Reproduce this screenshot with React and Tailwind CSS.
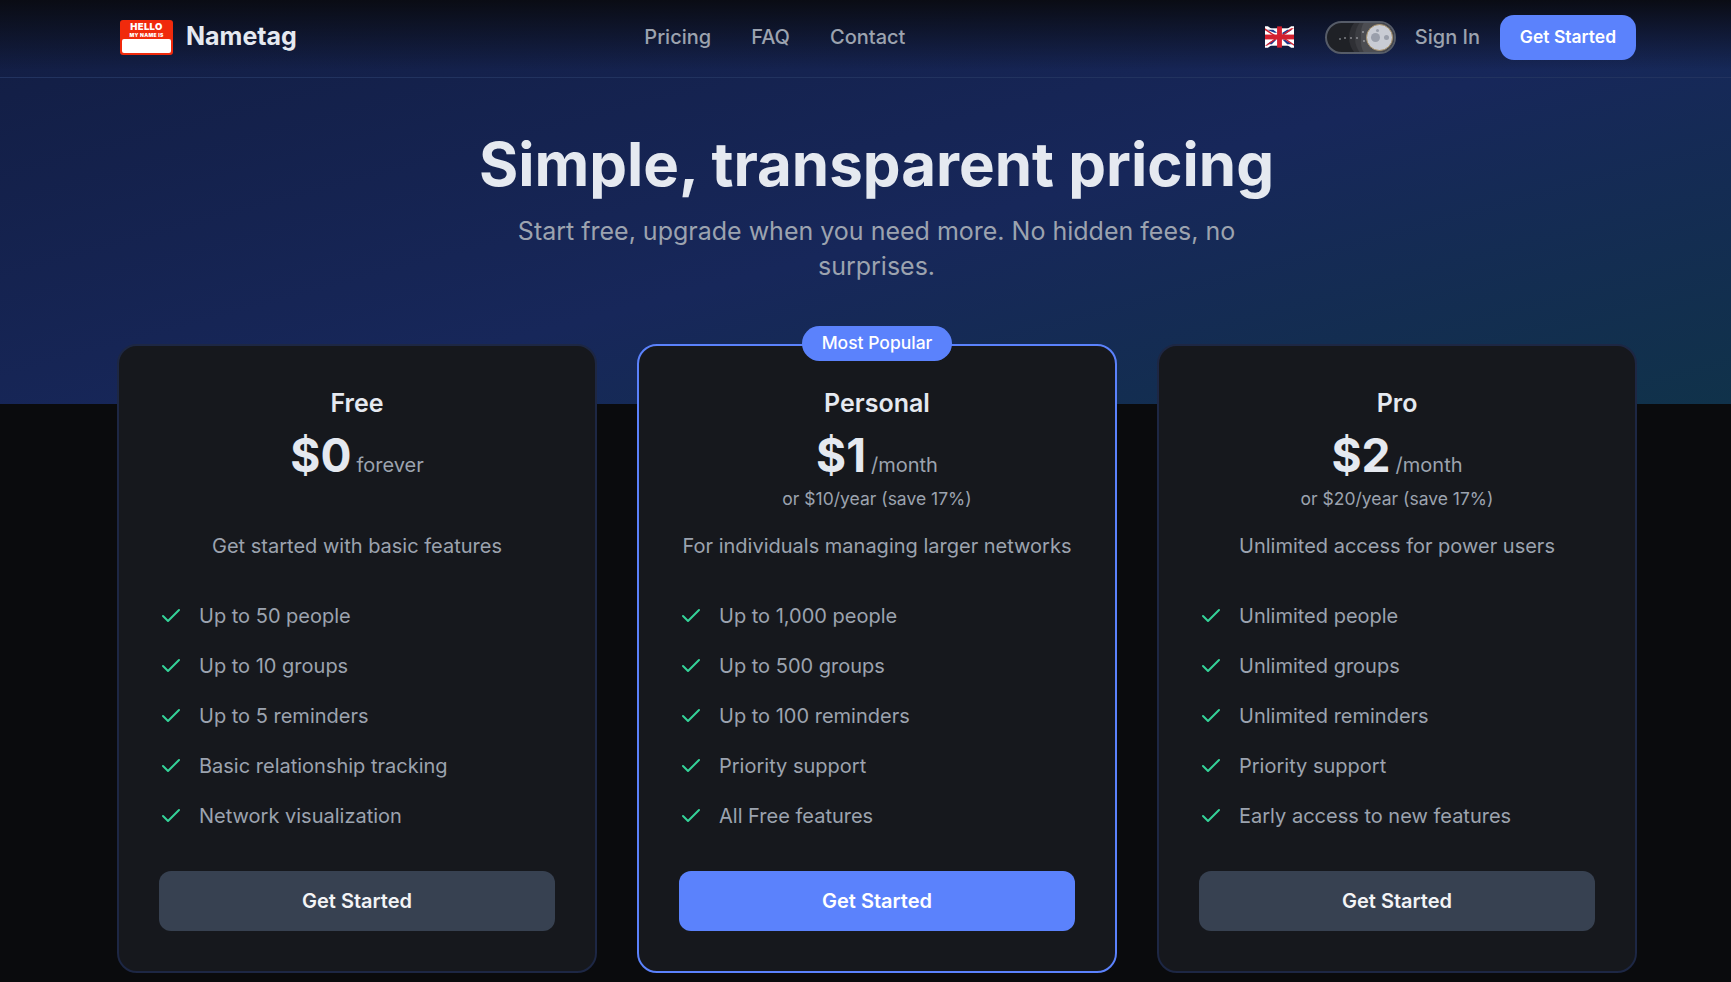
import { Check } from 'lucide-react';

const plans = [
  {
    name: 'Free',
    price: '$0',
    period: 'forever',
    desc: 'Get started with basic features',
    features: ['Up to 50 people', 'Up to 10 groups', 'Up to 5 reminders', 'Basic relationship tracking', 'Network visualization'],
  },
  {
    name: 'Personal',
    price: '$1',
    period: '/month',
    yearly: 'or $10/year (save 17%)',
    desc: 'For individuals managing larger networks',
    features: ['Up to 1,000 people', 'Up to 500 groups', 'Up to 100 reminders', 'Priority support', 'All Free features'],
    popular: true,
  },
  {
    name: 'Pro',
    price: '$2',
    period: '/month',
    yearly: 'or $20/year (save 17%)',
    desc: 'Unlimited access for power users',
    features: ['Unlimited people', 'Unlimited groups', 'Unlimited reminders', 'Priority support', 'Early access to new features'],
  },
];

function Logo() {
  return (
    <div className="flex h-[35px] w-[53px] flex-col items-center rounded-[3px] bg-[#f02a0c] p-[2px]">
      <span className="h-[10px] text-[9.5px] leading-[10px] font-black tracking-[0.3px] text-white">HELLO</span>
      <span className="h-[6px] text-[5px] leading-[6px] font-black tracking-[0.3px] text-white">MY NAME IS</span>
      <div className="mt-[1px] w-full flex-1 rounded-[2px] bg-white"></div>
    </div>
  );
}

function UkFlag() {
  return (
    <svg width="29" height="22" viewBox="0 0 60 44">
      <rect x="0" y="4" width="60" height="36" fill="#fff" />
      <path d="M0 6 L54 44 H60 V38 L6 0 H0 Z" fill="#fff" />
      <path d="M60 6 L6 44 H0 V38 L54 0 H60 Z" fill="#fff" />
      <path d="M4 7 H17 L25 13 H20 Z M36 13 L46 7 H56 L41 17 H36 Z M4 37 L19 27 H24 L14 37 Z M36 27 H41 L56 37 H46 Z" fill="#1f3a8f" />
      <path d="M0 4 L24 20 H19 L0 8 Z M60 4 L36 20 V17 L54 4 Z M0 40 L19 26 H24 L4 40 Z M60 40 L36 24 H41 L60 37 Z" fill="#d3202f" />
      <rect x="25" y="0" width="10" height="44" fill="#d3202f" />
      <rect x="0" y="17" width="60" height="10" fill="#d3202f" />
    </svg>
  );
}

function MoonToggle() {
  return (
    <div className="relative h-[33px] w-[71px] overflow-hidden rounded-full border-2 border-[#565c68] bg-[#1f2126]">
      <div className="absolute top-[-9px] right-[-8px] h-[47px] w-[53px] rounded-full bg-[#2f3035]"></div>
      <div className="absolute top-[-9px] right-[-6px] h-[47px] w-[45px] rounded-full bg-[#3c3d42]"></div>
      <div className="absolute top-[-9px] right-[-4px] h-[47px] w-[37px] rounded-full bg-[#4c4d52]"></div>
      <svg className="absolute top-0 left-0" width="67" height="29" viewBox="0 0 67 29">
        <circle cx="13" cy="16" r="0.7" fill="#d1d5db" />
        <circle cx="18" cy="15" r="0.7" fill="#e5e7eb" />
        <circle cx="24" cy="15" r="0.7" fill="#e5e7eb" />
        <circle cx="30" cy="15" r="0.7" fill="#e5e7eb" />
        <circle cx="36" cy="9" r="0.7" fill="#e5e7eb" />
        <circle cx="37" cy="18" r="0.7" fill="#e5e7eb" />
      </svg>
      <div className="absolute top-[1px] right-[1px] h-[27px] w-[27px] rounded-full border border-[#a8926a] bg-[#c9ccd4]">
        <div className="absolute top-[8px] left-[4px] h-[9px] w-[9px] rounded-full bg-[#9a9fab]"></div>
        <div className="absolute top-[10px] left-[17px] h-[5px] w-[5px] rounded-full bg-[#9a9fab]"></div>
        <div className="absolute top-[4px] left-[9px] h-[3px] w-[3px] rounded-full bg-[#9a9fab]"></div>
      </div>
    </div>
  );
}

function PlanCard({ plan }) {
  return (
    <div
      className={`relative flex h-[629px] w-[480px] flex-col rounded-[20px] border-2 bg-[#16181d] px-[40px] pt-[41px] pb-[40px] ${
        plan.popular ? 'border-[#5b82fc]' : 'border-[#1d2744]'
      }`}
    >
      {plan.popular && (
        <div className="absolute top-[-20px] left-1/2 flex h-[35px] w-[150px] -translate-x-1/2 items-center justify-center rounded-full bg-[#5b82fc] text-[17.5px] font-medium text-white">
          Most Popular
        </div>
      )}
      <h3 className="text-center text-[25px] leading-[32px] font-semibold text-[#e5e9f0]">{plan.name}</h3>
      <div className="mt-[6px] flex h-[60px] items-baseline justify-center gap-[5px]">
        <span className="text-[46px] leading-[60px] font-bold text-[#e5e9f0]">{plan.price}</span>
        <span className="text-[20px] text-[#9ca3af]">{plan.period}</span>
      </div>
      <p className="h-[28px] text-center text-[17.5px] leading-[28px] text-[#9ca3af]">{plan.yearly}</p>
      <p className="mt-[19px] text-center text-[20px] leading-[28px] text-[#9ca3af]">{plan.desc}</p>
      <ul className="mt-[40px] flex flex-col gap-[18px]">
        {plan.features.map((f) => (
          <li key={f} className="flex h-[32px] items-center gap-[16px] text-[20px] text-[#9ca3af]">
            <Check size={24} strokeWidth={2} className="shrink-0 text-[#34d399]" />
            {f}
          </li>
        ))}
      </ul>
      <button
        className={`mt-auto h-[60px] rounded-[12px] text-[20px] font-semibold ${
          plan.popular ? 'bg-[#5b82fc] text-white' : 'bg-[#374151] text-[#f3f4f6]'
        }`}
      >
        Get Started
      </button>
    </div>
  );
}

export default function App() {
  return (
    <div className="min-h-screen overflow-hidden bg-[#0a0b0d] font-['Inter',sans-serif]">
      <div className="h-[404px] bg-[linear-gradient(to_bottom,#0a0c14_0px,rgba(10,12,20,0)_70px),linear-gradient(165deg,#121d42_0%,#17275a_55%,#10324a_100%)]">
        <header className="border-b border-[#22335f]">
          <div className="ml-[117px] flex h-[77px] w-[1519px] items-center justify-between pb-[3px]">
            <a className="ml-[3px] flex items-center gap-[13px]">
              <Logo />
              <span className="text-[25px] font-bold text-[#e5e9f0]">Nametag</span>
            </a>
            <nav className="mr-[12px] flex items-center gap-[40px] text-[20px] font-medium text-[#9ca3af]">
              <a>Pricing</a>
              <a>FAQ</a>
              <a>Contact</a>
            </nav>
            <div className="flex items-center">
              <UkFlag />
              <div className="ml-[31px]">
                <MoonToggle />
              </div>
              <a className="ml-[19px] text-[20px] font-medium text-[#9ca3af]">Sign In</a>
              <button className="ml-[20px] h-[45px] w-[136px] rounded-[14px] bg-[#5b82fc] text-[17.5px] font-semibold text-white">
                Get Started
              </button>
            </div>
          </div>
        </header>
        <section className="pt-[50px] pl-[22px] text-center">
          <h1 className="text-[60px] leading-[72px] font-bold text-[#e5e9f0]">Simple, transparent pricing</h1>
          <p className="mx-auto mt-[14px] w-[760px] text-[25px] leading-[35px] text-[#9ca3af]">
            Start free, upgrade when you need more. No hidden fees, no surprises.
          </p>
        </section>
      </div>
      <main className="relative -mt-[60px] ml-[117px] flex w-[1520px] gap-[40px]">
        {plans.map((p) => (
          <PlanCard key={p.name} plan={p} />
        ))}
      </main>
    </div>
  );
}
